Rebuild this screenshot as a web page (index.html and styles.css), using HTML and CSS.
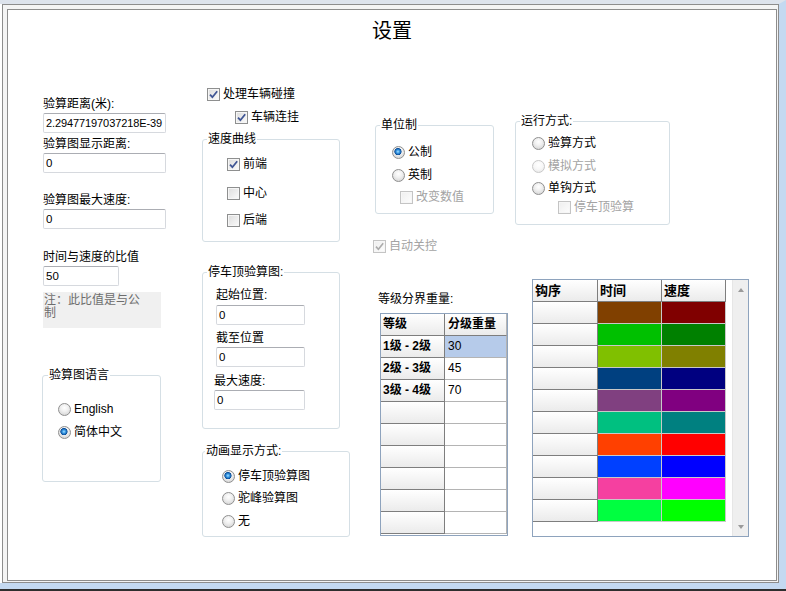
FILE: index.html
```html
<!DOCTYPE html>
<html lang="zh-CN">
<head>
<meta charset="utf-8">
<title>设置</title>
<link rel="stylesheet" href="styles.css">
</head>
<body>
<div class="win">
 <div class="outer">
  <div class="panel">
   <h1 class="title">设置</h1>
   <div class="main">
    <!-- left column -->
    <div class="col col-a">
      <div class="lbl a1">验算距离(米):</div>
      <div class="tb tb-a t1">2.29477197037218E-39</div>
      <div class="lbl a2">验算图显示距离:</div>
      <div class="tb tb-a t2">0</div>
      <div class="lbl a3">验算图最大速度:</div>
      <div class="tb tb-a t2">0</div>
      <div class="lbl a4">时间与速度的比值</div>
      <div class="tb tb-s t2">50</div>
      <div class="note">注：此比值是与公制</div>
      <div class="group g-lang">
        <div class="legend">验算图语言</div>
        <div class="opt lang1"><span class="radio"></span>English</div>
        <div class="opt lang2"><span class="radio on"></span>简体中文</div>
      </div>
    </div>

    <!-- middle column -->
    <div class="col col-b">
      <div class="opt cb1"><span class="cb"><svg width="9" height="9" viewBox="0 0 9 9"><path d="M1 4.6 L3.4 7.2 L8.2 1.3" fill="none" stroke="#3f5594" stroke-width="1.8"/></svg></span>处理车辆碰撞</div>
      <div class="opt cb2"><span class="cb"><svg width="9" height="9" viewBox="0 0 9 9"><path d="M1 4.6 L3.4 7.2 L8.2 1.3" fill="none" stroke="#3f5594" stroke-width="1.8"/></svg></span>车辆连挂</div>
      <div class="group g-speed">
        <div class="legend">速度曲线</div>
        <div class="opt s1"><span class="cb"><svg width="9" height="9" viewBox="0 0 9 9"><path d="M1 4.6 L3.4 7.2 L8.2 1.3" fill="none" stroke="#3f5594" stroke-width="1.8"/></svg></span>前端</div>
        <div class="opt s2"><span class="cb"></span>中心</div>
        <div class="opt s3"><span class="cb"></span>后端</div>
      </div>
      <div class="group g-stop">
        <div class="legend">停车顶验算图:</div>
        <div class="lbl p1">起始位置:</div>
        <div class="tb tb-m p1t">0</div>
        <div class="lbl p2">截至位置</div>
        <div class="tb tb-m p2t">0</div>
        <div class="lbl p3">最大速度:</div>
        <div class="tb tb-m p3t">0</div>
      </div>
      <div class="group g-anim">
        <div class="legend">动画显示方式:</div>
        <div class="opt m1"><span class="radio on"></span>停车顶验算图</div>
        <div class="opt m2"><span class="radio"></span>驼峰验算图</div>
        <div class="opt m3"><span class="radio"></span>无</div>
      </div>
    </div>

    <!-- right column -->
    <div class="col col-c">
      <div class="toprow">
        <div class="group g-unit">
          <div class="legend">单位制</div>
          <div class="opt u1"><span class="radio on"></span>公制</div>
          <div class="opt u2"><span class="radio"></span>英制</div>
          <div class="opt u3 dis"><span class="cb"></span>改变数值</div>
        </div>
        <div class="group g-run">
          <div class="legend">运行方式:</div>
          <div class="opt r1"><span class="radio"></span>验算方式</div>
          <div class="opt r2 dis"><span class="radio"></span>模拟方式</div>
          <div class="opt r3"><span class="radio"></span>单钩方式</div>
          <div class="opt r4 dis"><span class="cb"></span>停车顶验算</div>
        </div>
      </div>
      <div class="opt auto dis"><span class="cb"><svg width="9" height="9" viewBox="0 0 9 9"><path d="M1 4.6 L3.4 7.2 L8.2 1.3" fill="none" stroke="#ababab" stroke-width="1.6"/></svg></span>自动关控</div>
      <div class="botrow">
        <div class="grade">
          <div class="lbl glbl">等级分界重量:</div>
          <div class="gtable">
            <div class="gr"><div class="gh">等级</div><div class="gh gh2">分级重量</div></div>
            <div class="gr"><div class="gh">1级 - 2级</div><div class="gd sel">30</div></div>
            <div class="gr"><div class="gh">2级 - 3级</div><div class="gd">45</div></div>
            <div class="gr"><div class="gh">3级 - 4级</div><div class="gd">70</div></div>
            <div class="gr"><div class="gh"></div><div class="gd"></div></div>
            <div class="gr"><div class="gh"></div><div class="gd"></div></div>
            <div class="gr"><div class="gh"></div><div class="gd"></div></div>
            <div class="gr"><div class="gh"></div><div class="gd"></div></div>
            <div class="gr"><div class="gh"></div><div class="gd"></div></div>
            <div class="gr"><div class="gh"></div><div class="gd"></div></div>
          </div>
        </div>
        <div class="cgrid">
          <div class="cg">
            <div class="cr"><div class="ch">钩序</div><div class="ch c2">时间</div><div class="ch c2">速度</div></div>
            <div class="cr"><div class="ch"></div><div class="cc" style="background:#804000"></div><div class="cc" style="background:#800000"></div></div>
            <div class="cr"><div class="ch"></div><div class="cc" style="background:#00c000"></div><div class="cc" style="background:#008000"></div></div>
            <div class="cr"><div class="ch"></div><div class="cc" style="background:#80c000"></div><div class="cc" style="background:#808000"></div></div>
            <div class="cr"><div class="ch"></div><div class="cc" style="background:#004080"></div><div class="cc" style="background:#000080"></div></div>
            <div class="cr"><div class="ch"></div><div class="cc" style="background:#804080"></div><div class="cc" style="background:#800080"></div></div>
            <div class="cr"><div class="ch"></div><div class="cc" style="background:#00c080"></div><div class="cc" style="background:#008080"></div></div>
            <div class="cr"><div class="ch"></div><div class="cc" style="background:#ff4000"></div><div class="cc" style="background:#ff0000"></div></div>
            <div class="cr"><div class="ch"></div><div class="cc" style="background:#0040ff"></div><div class="cc" style="background:#0000ff"></div></div>
            <div class="cr"><div class="ch"></div><div class="cc" style="background:#f540a0"></div><div class="cc" style="background:#ff00ff"></div></div>
            <div class="cr"><div class="ch"></div><div class="cc" style="background:#00ff40"></div><div class="cc" style="background:#00ff00"></div></div>
          </div>
          <div class="sb"><span class="arr up"></span><span class="arr down"></span></div>
        </div>
      </div>
    </div>
   </div>
  </div>
 </div>
</div>
</body>
</html>
```

FILE: styles.css
```css
* { box-sizing: border-box; }
html, body { margin: 0; padding: 0; }
body {
  width: 786px; height: 591px; overflow: hidden;
  background: #2e2e2e;
  font-family: "Liberation Sans", "Noto Sans CJK SC", sans-serif;
  font-size: 12px; color: #000;
}
.win {
  width: 786px; height: 589px;
  border-top: 4px solid #dde3ec;
  border-right: 7px solid #c4d9f1;
  border-bottom: 6px solid #c4d9f1;
  padding-left: 2px;
  background: #fff;
}
.outer {
  height: 100%;
  border: 1px solid #8d8d8d;
  background: #f4f4f4;
  padding: 4px 1px 1px 4px;
}
.panel {
  height: 100%;
  border: 1px solid #8d8d8d;
  background: #fff;
  padding-top: 8px;
}
.title {
  margin: 0; font-size: 20px; font-weight: normal; line-height: 24px;
  text-align: center; font-family: "Noto Sans CJK SC", sans-serif;
}
.main { display: flex; align-items: flex-start; }
.col-a { width: 123px; margin-left: 35px; }
.col-b { width: 148px; margin-left: 36px; }
.col-c { width: 376px; margin-left: 23px; }

.lbl { line-height: 14px; white-space: nowrap; }
.tb {
  height: 20px; border: 1px solid #d6d9de; border-top-color: #abadb3;
  border-radius: 2px; padding-left: 2px; font-size: 11.5px; line-height: 18px;
  white-space: nowrap; overflow: hidden; background: #fff;
}
.tb-a { width: 123px; }
.tb-s { width: 76px; }
.t1 { font-size: 11px; letter-spacing: -0.1px; }

/* left column vertical rhythm */
.a1 { margin-top: 55px; }
.t1, .t2 { margin-top: 2px; }
.a2 { margin-top: 4px; }
.a3 { margin-top: 20px; }
.a4 { margin-top: 21px; }
.note {
  margin-top: 6px; width: 118px; height: 36px; background: #f0f0f0;
  color: #6d6d6d; padding: 2px 17px 0 1px; line-height: 13px;
}

/* group boxes */
.group { border: 1px solid #d5dfe5; border-radius: 3px; }
.legend {
  width: fit-content; margin: -8px 0 0 4px; padding: 0 1px;
  background: #fff; line-height: 14px; white-space: nowrap;
}
.opt { display: flex; align-items: center; height: 16px; line-height: 16px; white-space: nowrap; }
.radio {
  flex: none; width: 13px; height: 13px; margin-right: 3px; border-radius: 50%;
  border: 1px solid #8f8f8f;
  background: radial-gradient(circle at 50% 35%, #ffffff 0%, #f0f0f0 40%, #cdcdcd 100%);
}
.radio.on {
  background:
    radial-gradient(circle at 45% 42%, #a8e0ff 0, #3a9be6 1.6px, #0b4d98 3.3px, rgba(11,77,152,0) 3.9px),
    radial-gradient(circle at 50% 35%, #ffffff 0%, #f0f0f0 40%, #cdcdcd 100%);
}
.cb {
  flex: none; width: 13px; height: 13px; margin-right: 3px;
  border: 1px solid #8e8f8f;
  background: linear-gradient(135deg, #dcdcdc, #fbfbfb);
  box-shadow: inset 0 0 0 1px #f6f6f6;
  display: flex; align-items: center; justify-content: center;
}
.cb svg { display: block; }
.dis { color: #a3a3a3; }
.dis .cb { border-color: #c4c4c4; background: linear-gradient(135deg, #eeeeee, #fdfdfd); }
.dis .radio { border-color: #c9c9c9; background: radial-gradient(circle at 50% 35%, #ffffff 0%, #f7f7f7 50%, #e2e2e2 100%); }

.g-lang { width: 119px; height: 107px; margin: 47px 0 0 -1px; padding-left: 15px; }
.g-lang .legend { margin-left: -10px; }
.lang1 { margin-top: 19px; }
.lang2 { margin-top: 7px; }

/* middle column */
.cb1 { margin-top: 44px; padding-left: 5px; }
.cb2 { margin-top: 7px; padding-left: 33px; }
.g-speed { width: 138px; height: 103px; margin-top: 14px; padding-left: 24px; }
.g-speed .legend { margin-left: -20px; }
.s1 { margin-top: 10px; }
.s2 { margin-top: 13px; }
.s3 { margin-top: 11px; }
.g-stop { width: 138px; height: 157px; margin-top: 30px; padding-left: 13px; }
.g-stop .legend { margin-left: -9px; }
.tb-m { width: 89px; }
.p1 { margin-top: 9px; }
.p1t { margin-top: 3px; }
.p2 { margin-top: 6px; }
.p2t { margin-top: 2px; }
.p3 { margin-top: 7px; margin-left: -2px; }
.p3t { margin-top: 2px; margin-left: -2px; width: 91px; }
.g-anim { width: 148px; height: 86px; margin-top: 22px; padding-left: 19px; }
.g-anim .legend { margin-left: -17px; }
.m1 { margin-top: 10px; }
.m2 { margin-top: 6px; }
.m3 { margin-top: 7px; }

/* right column */
.toprow { display: flex; align-items: flex-start; }
.g-unit { width: 119px; height: 89px; margin: 83px 0 0 2px; padding-left: 16px; }
.g-unit .legend { margin-left: -12px; }
.u1 { margin-top: 12px; }
.u2 { margin-top: 7px; }
.u3 { margin-top: 6px; padding-left: 8px; }
.g-run { width: 155px; height: 104px; margin: 79px 0 0 21px; padding-left: 16px; }
.g-run .legend { margin-left: -12px; }
.r1 { margin-top: 7px; }
.r2 { margin-top: 7px; }
.r3 { margin-top: 6px; }
.r4 { margin-top: 3px; padding-left: 26px; }
.auto { margin-top: 13px; }

.botrow { display: flex; align-items: flex-start; }
.grade { width: 159px; }
.glbl { margin: 38px 0 0 5px; }
.gtable {
  margin: 7px 0 0 7px; width: 128px; height: 223px;
  border: 1px solid #8ea3bd; background: #fff;
}
.gr { display: flex; height: 22px; }
.gh {
  width: 64px; flex: none; border-right: 1px solid #7e7e7e; border-bottom: 1px solid #7e7e7e;
  background: linear-gradient(#ffffff, #ebebeb); font-weight: bold;
  padding-left: 2px; line-height: 21px; white-space: nowrap;
}
.gh2 { width: 62px; border-right-color: #b4b4b4; padding-left: 3px; }
.gd {
  width: 62px; flex: none; border-right: 1px solid #b4b4b4; border-bottom: 1px solid #b4b4b4;
  padding-left: 3px; line-height: 21px;
}
.gd.sel { background: #b6cbea; }

.cgrid {
  margin-top: 25px; width: 217px; height: 258px;
  border: 1px solid #8ea3bd; display: flex; background: #fff;
}
.cg { width: 193px; flex: none; }
.cr { display: flex; height: 22px; }
.ch {
  width: 65px; flex: none; border-right: 1px solid #7e7e7e; border-bottom: 1px solid #7e7e7e;
  background: linear-gradient(#ffffff, #ebebeb); font-weight: bold;
  padding-left: 2px; line-height: 21px; font-size: 13px;
}
.ch.c2 { width: 64px; }
.cc { width: 64px; flex: none; border-right: 1px solid #c8c8c8; border-bottom: 1px solid #c8c8c8; }
.sb {
  margin-left: 6px; width: 16px; flex: none; background: #efefef;
  border-left: 1px solid #e6e6e6;
  display: flex; flex-direction: column; justify-content: space-between; align-items: center;
  padding: 8px 0 7px;
}
.arr { width: 0; height: 0; border-left: 3.5px solid transparent; border-right: 3.5px solid transparent; }
.arr.up { border-bottom: 4px solid #9a9a9a; }
.arr.down { border-top: 4px solid #9a9a9a; }
```
